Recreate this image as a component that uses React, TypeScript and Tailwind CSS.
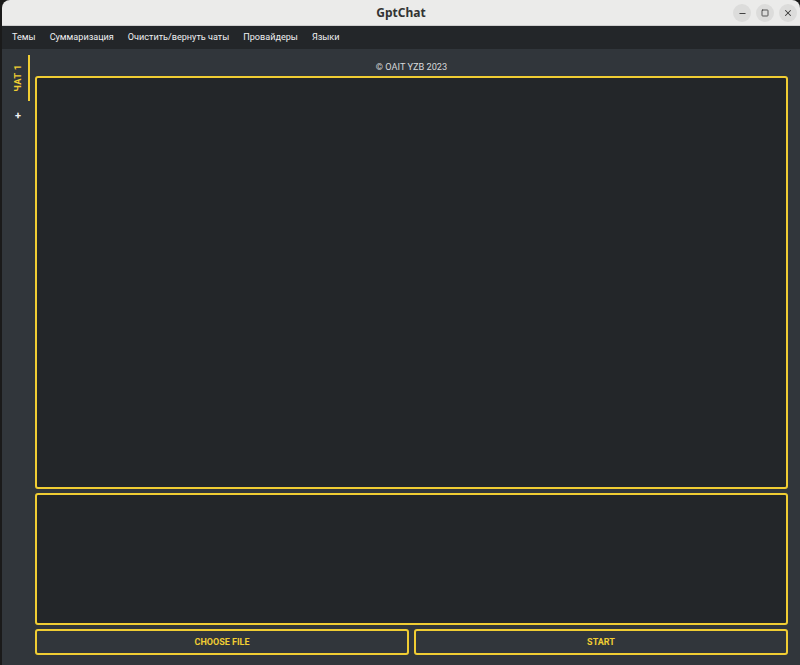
import { Minus, Square, X } from "lucide-react";

const MENU = ["Темы", "Суммаризация", "Очистить/вернуть чаты", "Провайдеры", "Языки"];

export default function App() {
  return (
    <div className="flex h-[665px] w-[800px] flex-col bg-[#1a1a1a] pl-[2px] font-['Roboto',Arial,sans-serif]">
      {/* Title bar */}
      <div className="relative flex h-[26px] shrink-0 items-center justify-center rounded-tl-[8px] rounded-tr-[8px] border-b border-[#cfcfcf] bg-[#ebebea]">
        <span className="font-['Noto_Sans',sans-serif] text-[12px] font-bold text-[#333]">GptChat</span>
        <div className="absolute right-[3px] top-[4px] flex gap-[5px]">
          <div className="flex h-[18px] w-[18px] items-center justify-center rounded-full bg-[#dcdcdb]">
            <Minus size={9} strokeWidth={2.5} className="text-[#3a3a3a]" />
          </div>
          <div className="flex h-[18px] w-[18px] items-center justify-center rounded-full bg-[#dcdcdb]">
            <Square size={8} strokeWidth={2.5} className="text-[#3a3a3a]" />
          </div>
          <div className="flex h-[18px] w-[18px] items-center justify-center rounded-full bg-[#dcdcdb]">
            <X size={10} strokeWidth={2.5} className="text-[#3a3a3a]" />
          </div>
        </div>
      </div>

      {/* Menu bar */}
      <div className="flex h-[23px] shrink-0 items-center gap-[14px] bg-[#232629] pl-[10px] text-[9.1px] text-[#eff0f1]">
        {MENU.map((m) => (
          <span key={m}>{m}</span>
        ))}
      </div>

      {/* Body */}
      <div className="flex flex-1 bg-[#31363b]">
        {/* Tabs */}
        <div className="flex w-[33px] shrink-0 flex-col items-start pt-[6px]">
          <div className="flex h-[46px] w-[28px] items-center justify-center border-r-2 border-[#f0cd33] pl-[6px]">
            <span className="-rotate-90 whitespace-nowrap text-[9.5px] font-bold tracking-[0.3px] text-[#f0cd33]">ЧАТ 1</span>
          </div>
          <div className="w-[28px] pl-[4px] pt-[9px] text-center text-[11px] font-bold leading-[12px] text-[#eff0f1]">+</div>
        </div>

        {/* Main */}
        <div className="flex flex-1 flex-col pb-[10px] pr-[12px]">
          <div className="flex h-[27px] shrink-0 items-center justify-center pt-[9px] text-[9.2px] text-[#d8dadc]">
            © OAIT YZB 2023
          </div>
          <div className="flex-1 rounded-[3px] border-2 border-[#f0cd33] bg-[#232629]" />
          <div className="mt-[4px] h-[132px] shrink-0 rounded-[3px] border-2 border-[#f0cd33] bg-[#232629]" />
          <div className="mt-[4px] flex h-[26px] shrink-0 gap-[5px]">
            <button className="flex flex-1 items-center justify-center rounded-[3px] border-2 border-[#f0cd33] bg-[#31363b] pt-[2px] text-[9px] font-bold text-[#f0cd33]">
              CHOOSE FILE
            </button>
            <button className="flex flex-1 items-center justify-center rounded-[3px] border-2 border-[#f0cd33] bg-[#31363b] pt-[2px] text-[9px] font-bold text-[#f0cd33]">
              START
            </button>
          </div>
        </div>
      </div>
    </div>
  );
}
